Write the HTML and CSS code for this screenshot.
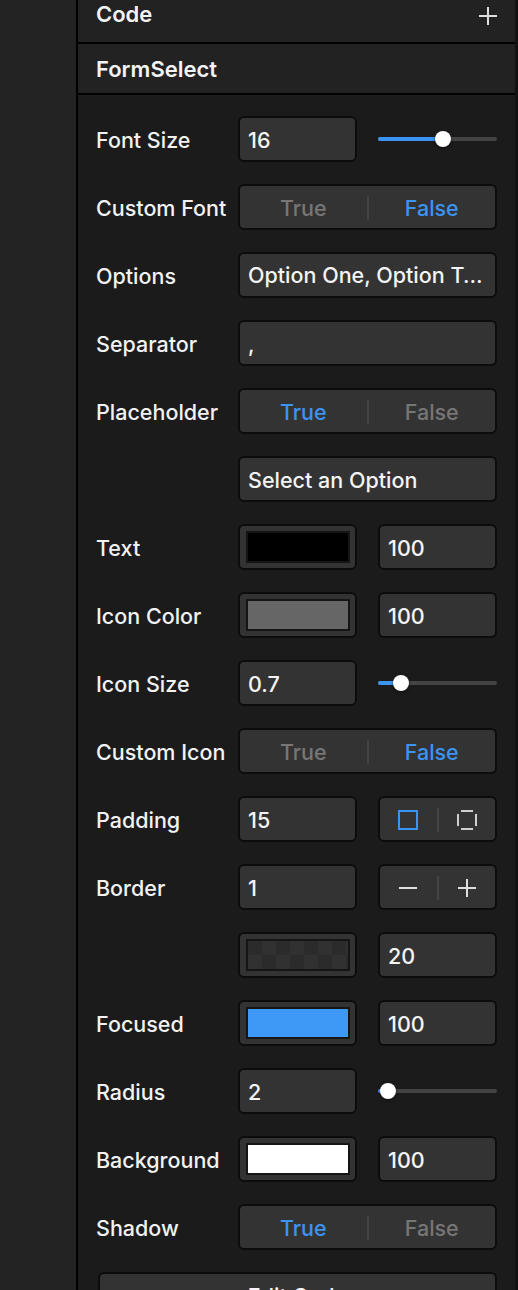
FILE: index.html
```html
<!DOCTYPE html>
<html>
<head>
<meta charset="utf-8">
<link rel="stylesheet" href="styles.css">
</head>
<body>
<div class="app">
  <aside class="rail"></aside>
  <main class="panel">
    <div class="head head-code">
      <span class="head-title">Code</span>
      <svg class="plus" width="18" height="18" viewBox="0 0 18 18"><path d="M9 0V18M0 9H18" stroke="#dedede" stroke-width="2"/></svg>
    </div>
    <div class="head head-main"><span class="head-title">FormSelect</span></div>
    <div class="props">
      <div class="label">Font Size</div>
      <div class="box">16</div>
      <div class="slider"><div class="track"><div class="fill" style="width:55%"></div><div class="thumb" style="left:55%"></div></div></div>

      <div class="label">Custom Font</div>
      <div class="box toggle wide"><span class="opt off">True</span><span class="sep"></span><span class="opt on">False</span></div>

      <div class="label">Options</div>
      <div class="box wide ellipsis">Option One, Option Two, Option Three</div>

      <div class="label">Separator</div>
      <div class="box wide">,</div>

      <div class="label">Placeholder</div>
      <div class="box toggle wide"><span class="opt on">True</span><span class="sep"></span><span class="opt off">False</span></div>

      <div class="label"></div>
      <div class="box wide">Select an Option</div>

      <div class="label">Text</div>
      <div class="box swatch"><div class="chip" style="background:#000000"></div></div>
      <div class="box">100</div>

      <div class="label">Icon Color</div>
      <div class="box swatch"><div class="chip" style="background:#666666"></div></div>
      <div class="box">100</div>

      <div class="label">Icon Size</div>
      <div class="box">0.7</div>
      <div class="slider"><div class="track"><div class="fill" style="width:19%"></div><div class="thumb" style="left:19%"></div></div></div>

      <div class="label">Custom Icon</div>
      <div class="box toggle wide"><span class="opt off">True</span><span class="sep"></span><span class="opt on">False</span></div>

      <div class="label">Padding</div>
      <div class="box">15</div>
      <div class="box toggle">
        <span class="opt"><svg width="20" height="20" viewBox="0 0 20 20"><rect x="1" y="1" width="18" height="18" fill="none" stroke="#3b94f2" stroke-width="2"/></svg></span>
        <span class="sep"></span>
        <span class="opt"><svg width="20" height="20" viewBox="0 0 20 20"><path d="M4 1H16M4 19H16M1 4V16M19 4V16" fill="none" stroke="#cfcfcf" stroke-width="2"/></svg></span>
      </div>

      <div class="label">Border</div>
      <div class="box">1</div>
      <div class="box toggle">
        <span class="opt"><svg width="20" height="20" viewBox="0 0 20 20"><path d="M1 10H19" stroke="#dedede" stroke-width="2"/></svg></span>
        <span class="sep"></span>
        <span class="opt"><svg width="20" height="20" viewBox="0 0 20 20"><path d="M1 10H19M10 1V19" stroke="#dedede" stroke-width="2"/></svg></span>
      </div>

      <div class="label"></div>
      <div class="box swatch"><div class="chip checker"></div></div>
      <div class="box">20</div>

      <div class="label">Focused</div>
      <div class="box swatch"><div class="chip" style="background:#3d99f5"></div></div>
      <div class="box">100</div>

      <div class="label">Radius</div>
      <div class="box">2</div>
      <div class="slider"><div class="track"><div class="fill" style="width:8%"></div><div class="thumb" style="left:8%"></div></div></div>

      <div class="label">Background</div>
      <div class="box swatch"><div class="chip" style="background:#ffffff"></div></div>
      <div class="box">100</div>

      <div class="label">Shadow</div>
      <div class="box toggle wide"><span class="opt on">True</span><span class="sep"></span><span class="opt off">False</span></div>

      <div class="box button">Edit Code</div>
    </div>
  </main>
</div>
</body>
</html>
```

FILE: styles.css
```css
html, body {
  margin: 0;
  padding: 0;
  background: #1b1b1b;
  height: 1290px;
  overflow: hidden;
}

body {
  font-family: Inter, "Noto Sans", "Liberation Sans", sans-serif;
  color: #f2f2f2;
  font-size: 21.5px;
}

.app {
  display: flex;
  height: 1290px;
}

.rail {
  width: 76px;
  flex: none;
  background: #232323;
  border-right: 2px solid #000;
}

.panel {
  width: 437px;
  flex: none;
  border-right: 3px solid #121212;
  background: #1b1b1b;
}

.head {
  display: flex;
  align-items: center;
  justify-content: space-between;
  background: #222222;
  padding: 0 18px;
  border-bottom: 2px solid #000;
}

.head-code {
  height: 42px;
  align-items: flex-start;
}

.head-code .head-title {
  line-height: 28px;
}

.head-code .plus {
  margin-top: 7px;
}

.head-main {
  height: 49px;
}

.head-title {
  font-weight: 600;
  font-size: 22px;
  color: #f4f4f4;
}

.props {
  display: grid;
  grid-template-columns: 121px 119px 119px;
  column-gap: 21px;
  row-gap: 22px;
  grid-auto-rows: 46px;
  padding: 21px 18px 0 18px;
}

.label {
  display: flex;
  align-items: center;
  padding-top: 1px;
  font-size: 21.5px;
  font-weight: 500;
  color: #f2f2f2;
  white-space: nowrap;
}

.box {
  box-sizing: border-box;
  height: 46px;
  background: #333333;
  border: 2px solid #0c0c0c;
  border-radius: 6px;
  display: flex;
  align-items: center;
  padding: 1px 8px 0 8px;
  font-size: 21.5px;
  font-weight: 500;
  color: #f4f4f4;
  white-space: nowrap;
  overflow: hidden;
}

.wide {
  grid-column: 2 / 4;
}

.ellipsis {
  display: block;
  line-height: 42px;
  padding-top: 0;
  text-overflow: ellipsis;
}

.toggle {
  padding: 1px 0 0 0;
}

.opt {
  flex: 1;
  display: flex;
  align-items: center;
  justify-content: center;
}

.opt.on {
  color: #3b94f2;
}

.opt.off {
  color: #767676;
}

.sep {
  width: 2px;
  height: 24px;
  background: #444444;
  flex: none;
}

.swatch {
  padding: 5px 5px 5px 6px;
}

.chip {
  box-sizing: border-box;
  width: 100%;
  height: 100%;
  border: 2px solid #151515;
}

.checker {
  background-color: #2b2b2b;
  background-image:
    linear-gradient(45deg, #313131 25%, transparent 25%, transparent 75%, #313131 75%),
    linear-gradient(45deg, #313131 25%, transparent 25%, transparent 75%, #313131 75%);
  background-size: 28px 28px;
  background-position: 0 0, 14px 14px;
}

.slider {
  display: flex;
  align-items: center;
}

.track {
  position: relative;
  width: 100%;
  height: 4px;
  border-radius: 2px;
  background: #444444;
}

.fill {
  height: 100%;
  border-radius: 2px;
  background: #3b94f2;
}

.thumb {
  position: absolute;
  top: 50%;
  width: 16px;
  height: 16px;
  margin-left: -8px;
  margin-top: -8px;
  border-radius: 50%;
  background: #ffffff;
  box-shadow: 0 1px 3px rgba(0, 0, 0, 0.6);
}

.button {
  grid-column: 1 / 4;
  margin-left: 2px;
  justify-content: center;
  align-items: flex-start;
  padding-top: 9px;
}
```
